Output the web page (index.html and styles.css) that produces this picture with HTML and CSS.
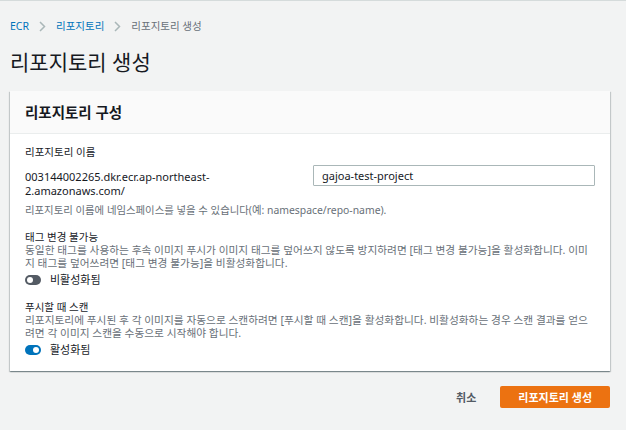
FILE: index.html
```html
<!DOCTYPE html>
<html lang="ko">
<head>
    <meta charset="UTF-8">
    <title>리포지토리 생성</title>
    <link rel="stylesheet" href="styles.css">
</head>
<body>
    <div class="page">
        <nav class="breadcrumb">
            <a href="#">ECR</a>
            <svg class="crumb-sep" width="7" height="11" viewBox="0 0 7 11"><path d="M1 1l4.5 4.5L1 10" fill="none" stroke="#aab7b8" stroke-width="1.5"/></svg>
            <a href="#">리포지토리</a>
            <svg class="crumb-sep" width="7" height="11" viewBox="0 0 7 11"><path d="M1 1l4.5 4.5L1 10" fill="none" stroke="#aab7b8" stroke-width="1.5"/></svg>
            <span class="current">리포지토리 생성</span>
        </nav>

        <h1 class="page-title">리포지토리 생성</h1>

        <div class="card">
            <div class="card-header">리포지토리 구성</div>
            <div class="card-body">
                <div class="field">
                    <div class="field-label">리포지토리 이름</div>
                    <div class="uri-row">
                        <div class="uri-prefix">003144002265.dkr.ecr.ap-northeast-<br>2.amazonaws.com/</div>
                        <input class="text-input" type="text" value="gajoa-test-project">
                    </div>
                    <div class="help">리포지토리 이름에 네임스페이스를 넣을 수 있습니다(예: namespace/repo-name).</div>
                </div>

                <div class="field">
                    <div class="field-title">태그 변경 불가능</div>
                    <div class="desc">동일한 태그를 사용하는 후속 이미지 푸시가 이미지 태그를 덮어쓰지 않도록 방지하려면 [태그 변경 불가능]을 활성화합니다. 이미지 태그를 덮어쓰려면 [태그 변경 불가능]을 비활성화합니다.</div>
                    <label class="toggle">
                        <span class="switch"></span>
                        <span>비활성화됨</span>
                    </label>
                </div>

                <div class="field">
                    <div class="field-title">푸시할 때 스캔</div>
                    <div class="desc">리포지토리에 푸시된 후 각 이미지를 자동으로 스캔하려면 [푸시할 때 스캔]을 활성화합니다. 비활성화하는 경우 스캔 결과를 얻으려면 각 이미지 스캔을 수동으로 시작해야 합니다.</div>
                    <label class="toggle">
                        <span class="switch on"></span>
                        <span>활성화됨</span>
                    </label>
                </div>
            </div>
        </div>

        <div class="actions">
            <button class="btn-link">취소</button>
            <button class="btn-primary">리포지토리 생성</button>
        </div>
    </div>
</body>
</html>
```

FILE: styles.css
```css
/* 기본 */
body {
    margin: 0;
    background-color: #f2f3f3;
    font-family: "Noto Sans", "Noto Sans CJK KR", sans-serif;
    color: #16191f;
    border-top: 1px solid #d5dbdb;
}

.page {
    padding: 0 16px 0 10px;
}

/* 경로 표시 */
.breadcrumb {
    display: flex;
    align-items: center;
    padding-top: 19px;
    font-size: 10.5px;
    line-height: 13px;
}

.breadcrumb a {
    color: #0073bb;
    text-decoration: none;
}

.crumb-sep {
    margin: 0 10px;
}

.breadcrumb .current {
    color: #687078;
}

/* 제목 */
.page-title {
    margin: 16px 0 16px;
    font-size: 21px;
    font-weight: normal;
    line-height: 26px;
}

/* 카드 */
.card {
    background-color: #fff;
    box-shadow: 0 1px 1px rgba(0, 28, 36, 0.3), 1px 1px 1px rgba(0, 28, 36, 0.15), -1px 1px 1px rgba(0, 28, 36, 0.15);
}

.card-header {
    background-color: #fafafa;
    border-bottom: 1px solid #eaeded;
    padding: 0 15px;
    font-size: 14.5px;
    font-weight: bold;
    line-height: 42px;
}

.card-body {
    padding: 11px 15px 14px;
}

.field + .field {
    margin-top: 14px;
}

.field-label {
    font-size: 10.5px;
    line-height: 14px;
}

.field-title {
    margin-top: 4px;
    font-size: 10.5px;
    line-height: 13px;
}

.uri-row {
    display: flex;
    align-items: flex-start;
    margin-top: 6px;
}

.uri-prefix {
    width: 288px;
    padding-top: 5px;
    font-size: 11px;
    line-height: 14px;
}

.text-input {
    flex: 1;
    height: 21px;
    box-sizing: border-box;
    border: 1px solid #aab7b8;
    border-radius: 1px;
    padding: 0 8px;
    font-family: inherit;
    font-size: 11px;
    color: #16191f;
}

.help {
    margin-top: 6px;
    font-size: 10.4px;
    line-height: 13px;
    color: #687078;
}

.desc {
    font-size: 10.7px;
    line-height: 12.5px;
    color: #687078;
}

/* 토글 */
.toggle {
    display: flex;
    align-items: center;
    gap: 9px;
    margin-top: 4px;
    font-size: 11px;
    line-height: 14px;
}

.switch {
    position: relative;
    width: 16px;
    height: 10px;
    border-radius: 6px;
    background-color: #545b64;
}

.switch::after {
    content: "";
    position: absolute;
    top: 2px;
    left: 2px;
    width: 6px;
    height: 6px;
    border-radius: 50%;
    background-color: #fff;
}

.switch.on {
    background-color: #0073bb;
}

.switch.on::after {
    left: 8px;
}

/* 버튼 */
.actions {
    display: flex;
    justify-content: flex-end;
    align-items: center;
    margin-top: 15px;
}

.btn-link,
.btn-primary {
    font-family: inherit;
    font-size: 11px;
    font-weight: bold;
    border: none;
    cursor: pointer;
}

.btn-link {
    background: none;
    color: #545b64;
    padding: 0 24px 0 0;
}

.btn-primary {
    height: 22px;
    padding: 0 18px;
    background-color: #ec7211;
    color: #fff;
    border-radius: 2px;
}
```
